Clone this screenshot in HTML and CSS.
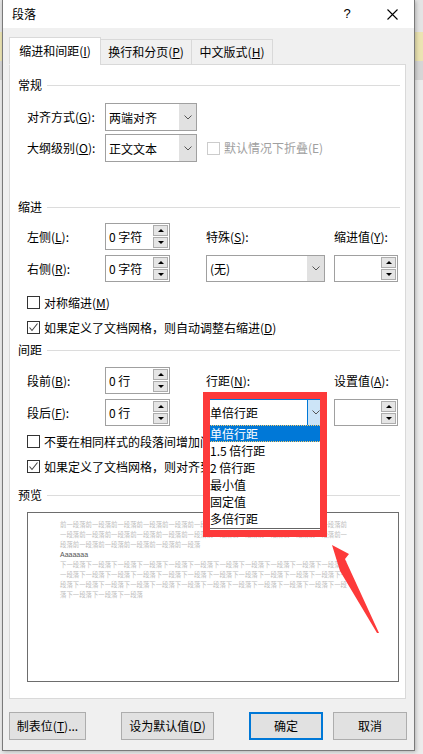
FILE: index.html
```html
<!DOCTYPE html>
<html lang="zh-CN">
<head>
  <meta charset="UTF-8" />
  <meta name="viewport" content="width=device-width, initial-scale=1.0" />
  <title>段落</title>
  <link rel="stylesheet" href="styles.css">
</head>
<body>
  <div class="window">
    <div class="titlebar">
      <span class="title">段落</span>
      <span class="help">?</span>
      <span class="close">
        <svg width="11" height="11" viewBox="0 0 11 11"><path d="M0.5 0.5 L10.5 10.5 M10.5 0.5 L0.5 10.5" stroke="#000" stroke-width="1.1" fill="none"/></svg>
      </span>
    </div>

    <div class="tabs">
      <div class="tab active">缩进和间距(<u>I</u>)</div>
      <div class="tab">换行和分页(<u>P</u>)</div>
      <div class="tab narrow">中文版式(<u>H</u>)</div>
    </div>

    <div class="panel">
      <div class="section-title first"><span>常规</span><i class="rule"></i></div>
      <div class="general">
        <div class="gen-row">
          <span class="label">对齐方式(<u>G</u>):</span>
          <div class="combo small"><span class="value">两端对齐</span><span class="arrow"><svg width="8" height="5" viewBox="0 0 8 5"><polyline points="0.5,0.5 4,4 7.5,0.5" fill="none" stroke="#555" stroke-width="1"/></svg></span></div>
        </div>
        <div class="gen-row">
          <span class="label">大纲级别(<u>O</u>):</span>
          <div class="combo small"><span class="value">正文文本</span><span class="arrow"><svg width="8" height="5" viewBox="0 0 8 5"><polyline points="0.5,0.5 4,4 7.5,0.5" fill="none" stroke="#555" stroke-width="1"/></svg></span></div>
          <span class="box disabled"></span>
          <span class="muted">默认情况下折叠(E)</span>
        </div>
      </div>

      <div class="section-title indent-title"><span>缩进</span><i class="rule"></i></div>
      <div class="grid">
        <span class="label">左侧(<u>L</u>):</span>
        <div class="spin"><span class="value">0 字符</span><span class="spin-btns"><b class="sb"><i class="up"></i></b><b class="sb"><i class="down"></i></b></span></div>
        <span class="label">特殊(<u>S</u>):</span>
        <span class="label">缩进值(<u>Y</u>):</span>

        <span class="label">右侧(<u>R</u>):</span>
        <div class="spin"><span class="value">0 字符</span><span class="spin-btns"><b class="sb"><i class="up"></i></b><b class="sb"><i class="down"></i></b></span></div>
        <div class="combo wide"><span class="value">(无)</span><span class="arrow"><svg width="8" height="5" viewBox="0 0 8 5"><polyline points="0.5,0.5 4,4 7.5,0.5" fill="none" stroke="#555" stroke-width="1"/></svg></span></div>
        <div class="spin short"><span class="value"></span><span class="spin-btns"><b class="sb"><i class="up"></i></b><b class="sb"><i class="down"></i></b></span></div>
      </div>
      <div class="check-row first-check"><span class="box"></span><span>对称缩进(<u>M</u>)</span></div>
      <div class="check-row"><span class="box"><svg width="11" height="11" viewBox="0 0 11 11"><polyline points="1.5,5.5 4,8.5 9.5,1.5" fill="none" stroke="#444" stroke-width="1.1"/></svg></span><span>如果定义了文档网格，则自动调整右缩进(<u>D</u>)</span></div>

      <div class="section-title spacing-title"><span>间距</span><i class="rule"></i></div>
      <div class="grid spacing-grid">
        <span class="label">段前(<u>B</u>):</span>
        <div class="spin"><span class="value">0 行</span><span class="spin-btns"><b class="sb"><i class="up"></i></b><b class="sb"><i class="down"></i></b></span></div>
        <span class="label">行距(<u>N</u>):</span>
        <span class="label">设置值(<u>A</u>):</span>

        <span class="label">段后(<u>F</u>):</span>
        <div class="spin"><span class="value">0 行</span><span class="spin-btns"><b class="sb"><i class="up"></i></b><b class="sb"><i class="down"></i></b></span></div>
        <div class="combo wide hot"><span class="value">单倍行距</span><span class="arrow"><svg width="8" height="5" viewBox="0 0 8 5"><polyline points="0.5,0.5 4,4 7.5,0.5" fill="none" stroke="#555" stroke-width="1"/></svg></span></div>
        <div class="spin short"><span class="value"></span><span class="spin-btns"><b class="sb"><i class="up"></i></b><b class="sb"><i class="down"></i></b></span></div>
      </div>
      <div class="check-row second-check"><span class="box"></span><span>不要在相同样式的段落间增加间距(<u>C</u>)</span></div>
      <div class="check-row"><span class="box"><svg width="11" height="11" viewBox="0 0 11 11"><polyline points="1.5,5.5 4,8.5 9.5,1.5" fill="none" stroke="#444" stroke-width="1.1"/></svg></span><span>如果定义了文档网格，则对齐到网格(<u>W</u>)</span></div>

      <div class="section-title preview-title"><span>预览</span><i class="rule"></i></div>
      <div class="preview">
        <div class="ghost">前一段落前一段落前一段落前一段落前一段落前一段落前一段落前一段落前一段落前一段落前一段落前</div>
        <div class="ghost">一段落前一段落前一段落前一段落前一段落前一段落前一段落前一段落前一段落前一段落前一段落前一</div>
        <div class="ghost">段落前一段落前一段落前一段落前一段落前一段落</div>
        <div class="sample">Aaaaaaa</div>
        <div class="ghost">下一段落下一段落下一段落下一段落下一段落下一段落下一段落下一段落下一段落下一段落下一段落下</div>
        <div class="ghost">一段落下一段落下一段落下一段落下一段落下一段落下一段落下一段落下一段落下一段落下一段落下一</div>
        <div class="ghost">段落下一段落下一段落下一段落下一段落下一段落下一段落下一段落下一段落下一段落下一段落下一段</div>
        <div class="ghost">落下一段落下一段落下一段落</div>
      </div>

      <!-- open line-spacing list and the red marking over it -->
      <div class="droplist">
        <div class="sel">单倍行距</div>
        <div>1.5 倍行距</div>
        <div>2 倍行距</div>
        <div>最小值</div>
        <div>固定值</div>
        <div>多倍行距</div>
      </div>
      <div class="mark"></div>
      <svg class="pointer" width="52" height="92" viewBox="0 0 52 92">
        <polygon points="2,2 19,11 15,16 49,90 47,90 10,28" fill="#fd3a3a"/>
      </svg>
    </div>

    <div class="buttons">
      <div class="btn b1">制表位(<u>T</u>)...</div>
      <div class="btn b2">设为默认值(<u>D</u>)</div>
      <div class="btn b3 default">确定</div>
      <div class="btn b4">取消</div>
    </div>
  </div>
</body>
</html>
```

FILE: styles.css
```css
* {
  box-sizing: border-box;
}
html, body {
  margin: 0;
  padding: 0;
}
body {
  width: 423px;
  height: 754px;
  overflow: hidden;
  font-family: "Noto Sans CJK SC", "Noto Sans", sans-serif;
  font-size: 12px;
  color: #000;
  background: linear-gradient(to bottom, #e4e4e4 0, #e4e4e4 32px, #ebe4b2 32px, #ebe4b2 61px, #d6d6d6 61px, #d6d6d6 80px, #ececec 80px);
}
u {
  text-underline-offset: 1px;
}
.window {
  margin-left: 2px;
  width: 413px;
  height: 751px;
  border: 1px solid #7a7a7a;
  border-top: none;
  background: #f0f0f0;
  box-shadow: 1px 1px 4px rgba(0,0,0,0.25);
}
.titlebar {
  height: 28px;
  background: #fff;
  display: flex;
  align-items: center;
  padding-left: 9px;
  line-height: 14px;
}
.title {
  flex: 1;
}
.help {
  width: 20px;
  text-align: center;
  font-family: "Liberation Sans", sans-serif;
  font-size: 13px;
  margin-right: 25px;
}
.close {
  width: 20px;
  margin-right: 12px;
  display: flex;
  justify-content: center;
}

/* tabs */
.tabs {
  display: flex;
  align-items: flex-end;
  height: 28px;
  margin-top: 9px;
  padding-left: 6px;
  position: relative;
  z-index: 1;
  margin-bottom: -1px;
}
.tab {
  width: 92px;
  height: 26px;
  border: 1px solid #d9d9d9;
  margin-left: -1px;
  background: #f0f0f0;
  display: flex;
  align-items: center;
  justify-content: center;
  line-height: 14px;
}
.tab.narrow {
  width: 82px;
}
.tab.active {
  margin-left: 0;
  height: 28px;
  background: #fff;
  border-bottom-color: #fff;
}

/* panel */
.panel {
  position: relative;
  margin-left: 6px;
  width: 397px;
  height: 635px;
  background: #fff;
  border: 1px solid #d9d9d9;
  padding: 0 5px 0 8px;
}
.section-title {
  display: flex;
  align-items: center;
  height: 14px;
  line-height: 14px;
}
.section-title .rule {
  flex: 1;
  height: 1px;
  background: #dcdcdc;
  margin-left: 5px;
}
.section-title.first { margin-top: 13px; }
.indent-title { margin-top: 38px; }
.spacing-title { margin-top: 3px; }
.preview-title { margin-top: 9px; }

.label {
  line-height: 14px;
  white-space: nowrap;
}
.general {
  margin: 11px 0 0 9px;
  display: flex;
  flex-direction: column;
  gap: 3px;
}
.gen-row {
  display: flex;
  align-items: center;
  height: 28px;
}
.gen-row .label {
  width: 78px;
}

.combo {
  display: flex;
  height: 28px;
  border: 1px solid #a0a0a0;
  background: #fff;
}
.combo.small { width: 92px; }
.combo.wide { width: 119px; height: 27px; }
.combo .value {
  flex: 1;
  padding-left: 3px;
  display: flex;
  align-items: center;
  white-space: nowrap;
}
.combo .arrow {
  width: 17px;
  background: #e1e1e1;
  display: flex;
  align-items: center;
  justify-content: center;
}
.combo.hot {
  border-color: #0078d7;
}
.combo.hot .arrow {
  background: #cce4f7;
  border-left: 1px solid #0078d7;
}

.box {
  width: 13px;
  height: 13px;
  border: 1px solid #333;
  background: #fff;
  margin-right: 4px;
  display: flex;
  align-items: center;
  justify-content: center;
  flex: none;
}
.box.disabled {
  border-color: #cccccc;
  margin-left: 10px;
}
.muted {
  color: #a0a0a0;
  line-height: 14px;
}

.grid {
  display: grid;
  grid-template-columns: 78px 101px 128px 64px;
  grid-template-rows: 27px 27px;
  row-gap: 5px;
  align-items: center;
  margin: 9px 0 0 9px;
}
.spacing-grid {
  margin-top: 10px;
}
.spin {
  width: 65px;
  height: 27px;
  border: 1px solid #a0a0a0;
  background: #fff;
  display: flex;
}
.spin.short { width: 64px; }
.spin .value {
  flex: 1;
  padding-left: 3px;
  display: flex;
  align-items: center;
  white-space: nowrap;
}
.spin-btns {
  width: 15px;
  margin: 1px 1px 1px 0;
  display: flex;
  flex-direction: column;
  gap: 1px;
}
.sb {
  flex: 1;
  border: 1px solid #adadad;
  background: #e5e5e5;
  display: flex;
  align-items: center;
  justify-content: center;
}
.up {
  border-left: 3px solid transparent;
  border-right: 3px solid transparent;
  border-bottom: 3px solid #000;
}
.down {
  border-left: 3px solid transparent;
  border-right: 3px solid transparent;
  border-top: 3px solid #000;
}

.check-row {
  display: flex;
  align-items: center;
  height: 25px;
  margin-left: 9px;
  line-height: 14px;
  white-space: nowrap;
}
.first-check { margin-top: 8px; }
.second-check { margin-top: 3px; }

/* preview */
.preview {
  margin: 10px 0 0 9px;
  width: 372px;
  height: 170px;
  border: 1px solid #6d6d6d;
  background: #fff;
  padding: 7px 0 0 32px;
}
.ghost, .sample {
  height: 10px;
  line-height: 10px;
  white-space: nowrap;
}
.ghost {
  font-size: 6.38px;
  color: #bdbdbd;
}
.sample {
  font-family: "Liberation Sans", sans-serif;
  font-size: 7px;
  color: #555;
}

/* open drop-down list and annotation */
.droplist {
  position: absolute;
  left: 196px;
  top: 360px;
  width: 118px;
  height: 104px;
  background: #fff;
  border-bottom: 1px solid #646464;
  z-index: 2;
}
.droplist div {
  height: 17px;
  line-height: 17px;
  padding-left: 4px;
  white-space: nowrap;
}
.droplist .sel {
  background: #0078d7;
  color: #fff;
  outline: 1px dotted #f3c96a;
  outline-offset: -1px;
}
.mark {
  position: absolute;
  left: 193px;
  top: 327px;
  width: 124px;
  height: 145px;
  border: 7px solid #fd3a3a;
  z-index: 3;
}
.pointer {
  position: absolute;
  left: 320px;
  top: 478px;
  z-index: 3;
}

/* bottom buttons */
.buttons {
  display: flex;
  margin-top: 13px;
  padding-left: 6px;
}
.btn {
  height: 28px;
  border: 1px solid #adadad;
  background: #e1e1e1;
  display: flex;
  align-items: center;
  justify-content: center;
  line-height: 14px;
  white-space: nowrap;
}
.b1 { width: 77px; }
.b2 { width: 93px; margin-left: 35px; }
.b3 { width: 74px; margin-left: 35px; }
.b4 { width: 74px; margin-left: 10px; }
.btn.default {
  border: 2px solid #0078d7;
}
```
